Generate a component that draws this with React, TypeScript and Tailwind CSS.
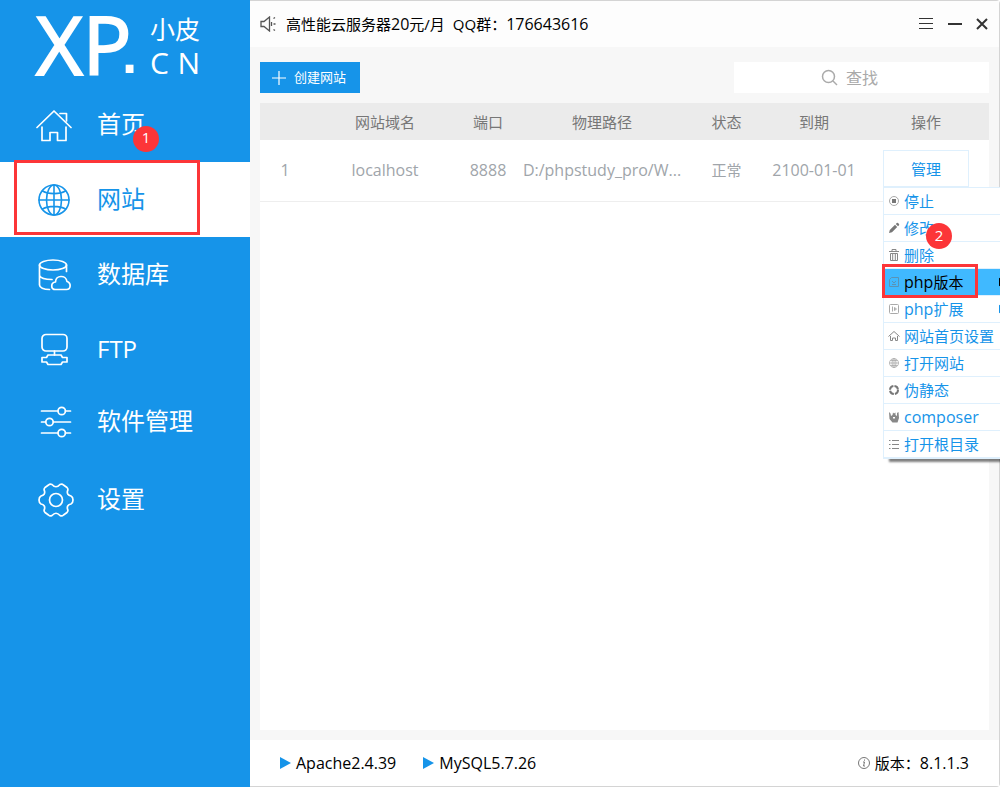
import React, { useState } from 'react';

type IconProps = { className?: string };

const stroke = { fill: 'none', stroke: 'currentColor', strokeLinecap: 'round', strokeLinejoin: 'round' } as const;

function HomeIcon() {
  return (
    <svg width="36" height="36" viewBox="0 0 36 36" strokeWidth="1.7" {...stroke}>
      <path d="M1 20.500 18 4l17 16.500" />
      <path d="M24 6.500h6.500V14" />
      <path d="M6 20v13.500h8V25.500h7.500v8H30V20" />
    </svg>
  );
}

function GlobeIcon() {
  return (
    <svg width="36" height="36" viewBox="0 0 36 36" strokeWidth="1.6" {...stroke}>
      <circle cx="18" cy="18" r="15" />
      <ellipse cx="18" cy="18" rx="7.500" ry="15" />
      <path d="M18 3v30M3 18h30M6.500 9c6 3.500 17 3.500 23 0M6.500 27c6-3.500 17-3.500 23 0" />
    </svg>
  );
}

function DatabaseIcon() {
  return (
    <svg width="36" height="36" viewBox="0 0 36 36" strokeWidth="1.7" {...stroke}>
      <ellipse cx="17" cy="8" rx="13.500" ry="5" />
      <path d="M3.500 8v20c0 2.500 4 4.500 10 4.500M30.500 8v6.500M3.500 18.500c1 2.500 6 4 12.500 4" />
      <path d="M19.500 32.500c-5 0-5-7 0-7.500 0-7 10.500-7.500 11.500-.5 4.500 1.500 4 8-.5 8z" />
    </svg>
  );
}

function FtpIcon() {
  return (
    <svg width="36" height="36" viewBox="0 0 36 36" strokeWidth="1.7" {...stroke}>
      <rect x="6" y="2.500" width="25" height="16.500" rx="4" />
      <path d="M18.500 19v4" />
      <path d="M12 23h13l1.500 2.500H31v4.500h-4.500L25 32.500H12L10.500 30H6v-4.500h4.500z" />
    </svg>
  );
}

function SlidersIcon() {
  return (
    <svg width="36" height="36" viewBox="0 0 36 36" strokeWidth="1.7" {...stroke}>
      <path d="M5.500 7h16.500M29.500 7h5M5.500 18h4M17.500 18h17M5.500 29h16.500M29.500 29h5" />
      <circle cx="25.700" cy="7" r="3.700" />
      <circle cx="13.500" cy="18" r="3.700" />
      <circle cx="25.700" cy="29" r="3.700" />
    </svg>
  );
}

function GearIcon() {
  return (
    <svg width="36" height="36" viewBox="-2 0 36 36" strokeWidth="1.7" className="overflow-visible" {...stroke}>
      <path d="M10.500 3Q12 1.500 14 2.500Q18 7 22 2.500Q24 1.500 25.500 3L29 5.500Q30.500 7 29.500 9Q28.500 13 33 14Q35 15 35 18Q35 21 33 22Q28.500 23 29.500 27Q30.500 29 29 30.500L25.500 33Q24 34.500 22 33.500Q18 29 14 33.500Q12 34.500 10.500 33L7 30.500Q5.500 29 6.500 27Q7.500 23 3 22Q1 21 1 18Q1 15 3 14Q7.500 13 6.500 9Q5.500 7 7 5.500Z" />
      <circle cx="18" cy="18" r="6.500" />
    </svg>
  );
}

function SpeakerIcon() {
  return (
    <svg width="16" height="16" viewBox="0 0 16 16" className="shrink-0 text-[#555]" fill="none" stroke="currentColor" strokeWidth="1.3">
      <path d="M1 5.500h3L9.500 1v14L4 10.500H1z" />
      <path d="M11.500 6v4M13.500 2.500 15 1.500M13.500 8H15.500M13.500 13.500l1.500 1" />
    </svg>
  );
}

function StopIcon() {
  return (
    <svg width="12" height="12" viewBox="0 0 12 12">
      <circle cx="6" cy="6" r="4.500" fill="none" stroke="#aaa" />
      <rect x="4" y="4" width="4" height="4" fill="#777" />
    </svg>
  );
}

function PencilIcon() {
  return (
    <svg width="12" height="12" viewBox="0 0 12 12" fill="#777">
      <path d="M1 11l.8-3L7 2.800 9.200 5 4 10.200zM7.800 2l1-1q.6-.4 1.200 0l1 1q.4.6 0 1.200l-1 1z" />
    </svg>
  );
}

function TrashIcon() {
  return (
    <svg width="12" height="12" viewBox="0 0 12 12" fill="none" stroke="#888">
      <path d="M1 2.500h10M4 2V.5h4V2M2.500 4.500h7v7h-7zM4.700 5v6M7.300 5v6" />
    </svg>
  );
}

function VersionIcon() {
  return (
    <svg width="12" height="12" viewBox="0 0 12 12" fill="none" stroke="#5a93b5">
      <path d="M1.500 3.500 3.500 1.500h7v9h-9zM4 5l2 2 2-2M4 8.500h4" />
    </svg>
  );
}

function ExtensionIcon() {
  return (
    <svg width="12" height="12" viewBox="0 0 12 12" fill="none" stroke="#aaa">
      <rect x="1.500" y="1.500" width="9" height="9" rx="1" />
      <path d="M4.500 3.500v5M6.500 4.500 8.500 6l-2 1.500z" />
    </svg>
  );
}

function SmallHomeIcon() {
  return (
    <svg width="12" height="12" viewBox="0 0 12 12" fill="none" stroke="#888">
      <path d="M.5 6.500 6 1.500l5.500 5M2.500 6v4.500h2V8h3v2.500h2V6" />
    </svg>
  );
}

function SmallGlobeIcon() {
  return (
    <svg width="12" height="12" viewBox="0 0 12 12" fill="none" stroke="#aaa" strokeWidth=".8">
      <circle cx="6" cy="6" r="4.500" />
      <ellipse cx="6" cy="6" rx="2" ry="4.500" />
      <path d="M1.500 6h9M6 1.500v9M2.500 3.500h7M2.500 8.500h7" />
    </svg>
  );
}

function RingIcon() {
  return (
    <svg width="12" height="12" viewBox="0 0 12 12" fill="none" stroke="#777" strokeWidth="2">
      <circle cx="6" cy="6" r="4" strokeDasharray="5.200 1.080" />
    </svg>
  );
}

function ComposerIcon() {
  return (
    <svg width="12" height="12" viewBox="0 0 12 12" fill="#888">
      <path d="M1 1l1.500 1.500L3 5l1.500-1L5 1.500l1 1 1.500-1V4L9 5V2l1.500-1 .5 6-1.500 4.500h-5L1.500 8z" />
      <path d="M5 6h2v1.500H5z" fill="#fff" />
    </svg>
  );
}

function ListIcon() {
  return (
    <svg width="12" height="12" viewBox="0 0 12 12" fill="none" stroke="#888">
      <path d="M1 2.500h1.500M4 2.500h7M1 6.500h1.500M4 6.500h7M1 10.500h1.500M4 10.500h7" />
    </svg>
  );
}

function PlayMark({ className }: IconProps) {
  return (
    <svg viewBox="0 0 11 12" className={className} fill="currentColor">
      <path d="M0 0l11 6-11 6z" />
    </svg>
  );
}

function Badge({ children, className }: { children: React.ReactNode; className: string }) {
  return (
    <span className={`absolute z-20 flex size-[26px] items-center justify-center rounded-full bg-[#fc3538] pb-0.5 text-[15px] leading-none text-white ${className}`}>
      {children}
    </span>
  );
}

const navItems = [
  { label: '首页', icon: HomeIcon, height: 'h-[75px]' },
  { label: '网站', icon: GlobeIcon, height: 'h-[75px]' },
  { label: '数据库', icon: DatabaseIcon, height: 'h-[75px]' },
  { label: 'FTP', icon: FtpIcon, height: 'h-[75px]' },
  { label: '软件管理', icon: SlidersIcon, height: 'h-[69px]' },
  { label: '设置', icon: GearIcon, height: 'h-[87px]' },
];

const menuItems = [
  { label: '停止', icon: StopIcon },
  { label: '修改', icon: PencilIcon },
  { label: '删除', icon: TrashIcon },
  { latin: 'php', label: '版本', icon: VersionIcon, sub: true },
  { latin: 'php', label: '扩展', icon: ExtensionIcon, sub: true },
  { label: '网站首页设置', icon: SmallHomeIcon },
  { label: '打开网站', icon: SmallGlobeIcon },
  { label: '伪静态', icon: RingIcon },
  { latin: 'composer', label: '', icon: ComposerIcon },
  { label: '打开根目录', icon: ListIcon },
];

function Sidebar() {
  const [active, setActive] = useState('网站');

  return (
    <aside className="w-[250px] shrink-0 bg-[#1694e9] text-white">
      <div className="flex h-[87px] items-center gap-4 pl-9">
        <div className="relative w-[98px] text-[81px] leading-[87px] [-webkit-text-stroke:2px_white]">
          XP
          <span className="absolute -right-1 bottom-0 font-['Liberation_Sans'] text-[60px] leading-[70px]">.</span>
        </div>
        <div className="w-[50px] pt-1.5">
          <div className="text-[25px] leading-8">小皮</div>
          <div className="flex justify-between text-[30px] leading-9">
            <span>C</span>
            <span>N</span>
          </div>
        </div>
      </div>
      <nav>
        {navItems.map(({ label, icon: Icon, height }) => (
          <button
            key={label}
            onClick={() => setActive(label)}
            className={`relative flex w-full items-center gap-[25px] pl-9 text-left text-2xl ${height} ${
              active === label ? 'bg-white text-[#1694e9]' : 'text-white'
            }`}
          >
            <Icon />
            <span className="relative pb-0.5">
              {label}
              {label === '首页' && <Badge className="top-[18px] left-9">1</Badge>}
            </span>
            {label === '网站' && (
              <span className="absolute -top-0.5 left-3.5 h-[75px] w-[186px] border-3 border-[#fc3538]" />
            )}
          </button>
        ))}
      </nav>
    </aside>
  );
}

function ActionMenu() {
  return (
    <ul className="absolute top-full left-0 z-10 w-[133px] border border-[#dff0fd] bg-white shadow-[6px_3px_2px_0_rgba(0,0,0,0.5)]">
      {menuItems.map(({ latin = '', label, icon: Icon, sub }) => (
        <li key={latin + label} className="relative">
          <button
            className={`flex h-[27px] w-full items-center gap-1 border-b border-[#dff0fd] pr-2 pl-1 text-[15px] whitespace-nowrap ${
              label === '版本' ? 'bg-[#40b9ff] text-black' : 'text-[#1694e9]'
            }`}
          >
            <Icon />
            <span>
              {latin && <span className="text-base">{latin}</span>}
              {label}
            </span>
            {sub && <PlayMark className="ml-auto h-[10px] w-2" />}
          </button>
          {label === '修改' && <Badge className="top-2 left-[42px]">2</Badge>}
          {label === '版本' && (
            <span className="pointer-events-none absolute -top-[5px] -left-0.5 z-10 h-[34px] w-24 border-3 border-[#fc3538]" />
          )}
        </li>
      ))}
    </ul>
  );
}

function SiteTable() {
  return (
    <table className="w-full table-fixed text-center text-[15px] whitespace-nowrap">
      <colgroup>
        <col className="w-[50px]" />
        <col className="w-[150px]" />
        <col className="w-14" />
        <col />
        <col className="w-[77px]" />
        <col className="w-[98px]" />
        <col className="w-[126px]" />
      </colgroup>
      <thead>
        <tr className="h-[37px] bg-[#ebebeb] text-[#777] *:pt-0.5 *:font-normal">
          <th></th>
          <th>网站域名</th>
          <th>端口</th>
          <th>物理路径</th>
          <th>状态</th>
          <th>到期</th>
          <th>操作</th>
        </tr>
      </thead>
      <tbody>
        <tr className="h-[61px] border-b border-[#eee] text-base text-[#a0a5aa]">
          <td>1</td>
          <td>localhost</td>
          <td>8888</td>
          <td>D:/phpstudy_pro/W...</td>
          <td className="text-[15px]">正常</td>
          <td>2100-01-01</td>
          <td className="px-5 pt-2.5 align-top">
            <div className="relative text-[15px]">
              <button className="block h-[37px] w-full border border-[#dff0fd] bg-white pt-0.5 text-[#1694e9]">管理</button>
              <ActionMenu />
            </div>
          </td>
        </tr>
      </tbody>
    </table>
  );
}

export default function App() {
  return (
    <div className="flex min-h-screen overflow-hidden bg-white font-['Open_Sans','Noto_Sans_CJK_SC',sans-serif] text-black">
      <Sidebar />
      <div className="flex min-w-0 flex-1 flex-col rounded-r border-y border-r border-[#d4d4d4]">
        <header className="flex h-[46px] items-center bg-[#fdfdfd] pr-[11px] pl-2.5">
          <SpeakerIcon />
          <p className="ml-2.5 flex gap-2 text-[15px]">
            <span>
              高性能云服务器<span className="text-base">20</span>元/月
            </span>
            <span>
              QQ群：<span className="text-base">176643616</span>
            </span>
          </p>
          <div className="ml-auto flex items-center gap-[13px] text-[#333]">
            <button aria-label="菜单">
              <svg width="16" height="16" viewBox="0 0 16 16" stroke="currentColor">
                <path d="M1 2.500h14M1 7.500h14M1 12.500h14" />
              </svg>
            </button>
            <button aria-label="最小化">
              <svg width="16" height="16" viewBox="0 0 16 16" stroke="currentColor" strokeWidth="2">
                <path d="M1 8h14" />
              </svg>
            </button>
            <button aria-label="关闭">
              <svg width="12" height="16" viewBox="0 0 12 16" stroke="currentColor" strokeWidth="2">
                <path d="M1 3l10 10M11 3 1 13" />
              </svg>
            </button>
          </div>
        </header>

        <main className="flex flex-1 flex-col gap-2.5 bg-[#f7f7f7] px-2.5 pt-[15px] pb-2.5">
          <div className="flex h-[31px] justify-between">
            <button className="flex w-[100px] items-center gap-2 bg-[#1694e9] pl-3 text-[13px] text-white">
              <svg width="14" height="14" viewBox="0 0 14 14" stroke="currentColor" strokeWidth="1.2">
                <path d="M7 0v14M0 7h14" />
              </svg>
              创建网站
            </button>
            <label className="flex w-[255px] items-center gap-2 bg-white pl-[87px] text-[#aaa]">
              <svg width="17" height="17" viewBox="0 0 17 17" fill="none" stroke="currentColor" strokeWidth="1.5" className="shrink-0">
                <circle cx="7.500" cy="7.500" r="6" />
                <path d="M12 12l4 4" />
              </svg>
              <input type="text" aria-label="查找" placeholder="查找" className="w-full min-w-0 text-base outline-none placeholder:text-[#aaa]" />
            </label>
          </div>
          <section className="flex-1 bg-white">
            <SiteTable />
          </section>
        </main>

        <footer className="flex h-[46px] items-center bg-white px-[30px] text-base">
          <PlayMark className="h-3 w-[11px] text-[#1694e9]" />
          <span className="ml-[5px]">Apache2.4.39</span>
          <PlayMark className="ml-[27px] h-3 w-[11px] text-[#1694e9]" />
          <span className="ml-[5px]">MySQL5.7.26</span>
          <svg width="12" height="12" viewBox="0 0 12 12" fill="none" stroke="#777" className="ml-auto">
            <circle cx="6" cy="6" r="5.500" />
            <path d="M6.500 2.500v1.200M5 5h1.500L5.500 9H7" />
          </svg>
          <span className="ml-[5px] text-[15px]">
            版本：<span className="text-base">8.1.1.3</span>
          </span>
        </footer>
      </div>
    </div>
  );
}
